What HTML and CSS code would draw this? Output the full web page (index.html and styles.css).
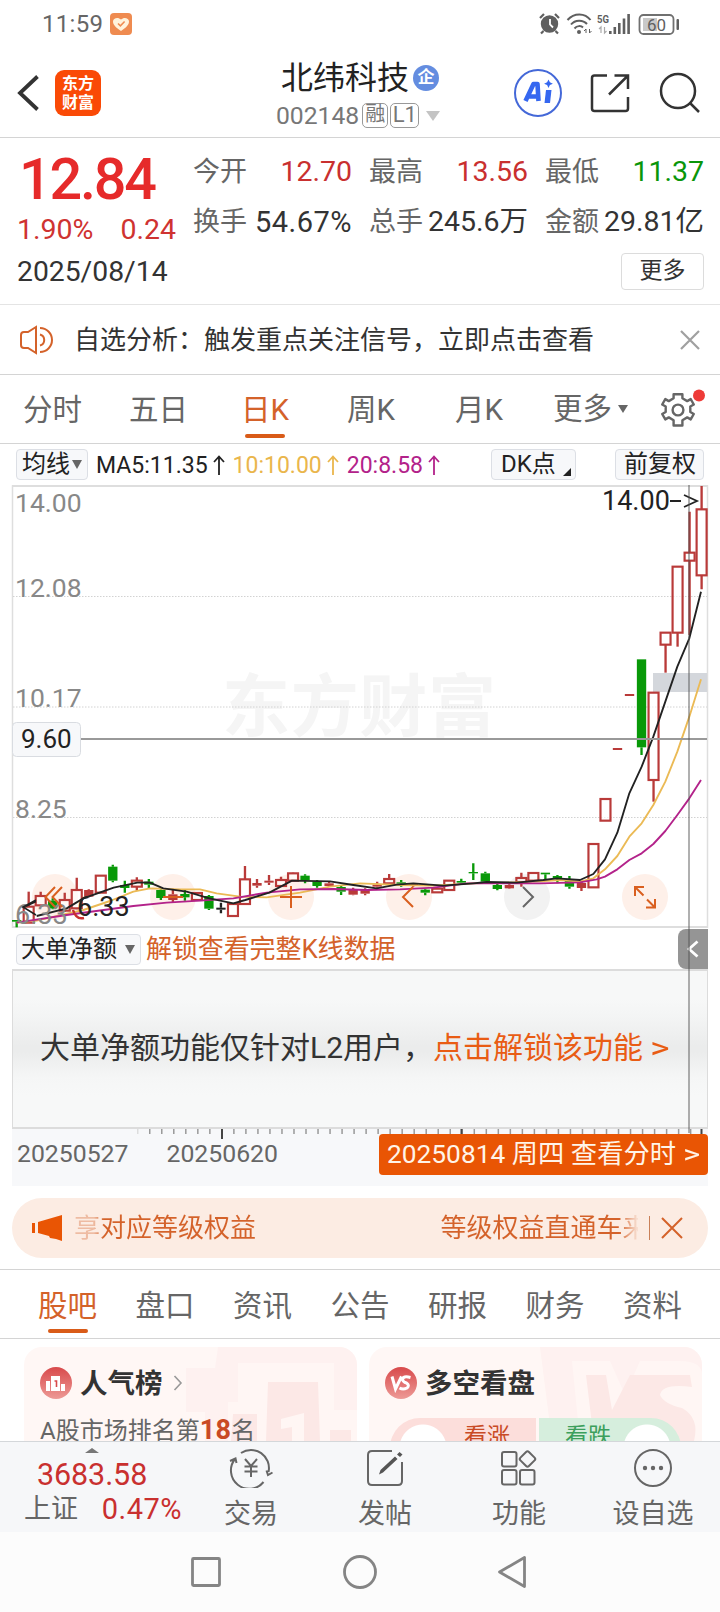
FILE: index.html
```html
<!DOCTYPE html>
<html lang="zh-CN">
<head>
<meta charset="utf-8">
<title>北纬科技 002148</title>
<link rel="stylesheet" href="styles.css">
</head>
<body>
<div class="phone">
  <div class="status">
    <span class="clock">11:59</span>
    <svg class="health" width="22" height="22" viewBox="0 0 22 22"><rect width="22" height="22" rx="4" fill="#ef8b50"/><path d="M11 18C6 14.500 3 12 3 8.500C3 5 8 3.500 11 6.500C14 3.500 19 5 19 8.500C19 12 16 14.500 11 18Z" fill="#fff3dc"/><path d="M8 10.500l2.400 2.300 4.200-4.300" fill="none" stroke="#ef8b50" stroke-width="1.600"/></svg>
    <svg class="sys" width="142" height="24" viewBox="538 12 142 24">
      <g fill="#5f5f5f">
        <circle cx="549.500" cy="24" r="8.700"/><path d="M540 18l4-4M559 18l-4-4M543.500 31l-2.500 2.500M555.500 31l2.500 2.500" stroke="#5f5f5f" stroke-width="2.200"/>
        <path d="M550 19v5.500l3 3" stroke="#fff" stroke-width="1.800" fill="none"/>
        <g fill="none" stroke="#5f5f5f" stroke-width="2"><path d="M567.500 20C574 12.500 585 12.500 590.500 20"/><path d="M571 24.500C575 19.500 583 19.500 587 24"/><path d="M574.500 28.500C577 25.500 581 25.500 583 27.500"/></g>
        <circle cx="579" cy="32" r="2"/>
        <path d="M586 33v-4l-2 2M589.500 29v4l2-2" stroke="#5f5f5f" stroke-width="1" fill="none"/>
        <text x="597" y="23" font-size="11" font-weight="700" textLength="12" lengthAdjust="spacingAndGlyphs">5G</text>
        <path d="M601 33v-6l-2 2M604.500 27v6l2-2" stroke="#aaa" stroke-width="1.200" fill="none"/>
        <rect x="609" y="31" width="2.600" height="3"/><rect x="613.500" y="27" width="2.600" height="7"/><rect x="618" y="23" width="2.600" height="11"/><rect x="622.700" y="18.500" width="2.600" height="15.500"/><rect x="627.300" y="14" width="2.600" height="20"/>
        <rect x="643" y="18" width="14" height="13" fill="#c9c9c9"/>
        <rect x="639.500" y="15" width="34" height="19" rx="4" fill="none" stroke="#707070" stroke-width="1.800"/>
        <rect x="676.500" y="19" width="2.500" height="11" rx="1"/>
        <text x="647" y="30.500" font-size="17">60</text>
      </g>
    </svg>
  </div>

  <header class="header">
    <svg class="back" width="24" height="38" viewBox="0 0 24 38"><path d="M20.500 2.500L3 19L20.500 35.500" fill="none" stroke="#333" stroke-width="3.800"/></svg>
    <div class="brand"><span>东方</span><span>财富</span></div>
    <div class="title">
      <div class="name">北纬科技<i class="corp">企</i></div>
      <div class="code">002148<i class="tag">融</i><i class="tag wide">L1</i><b class="drop"></b></div>
    </div>
    <svg class="tools" width="190" height="52" viewBox="514 67 190 52">
      <circle cx="539" cy="93" r="23" fill="none" stroke="#4468d8" stroke-width="2"/>
      <path d="M526.500 101L534.500 84H538.500L539.500 101M529.500 96.500H539" fill="none" stroke="#3567f0" stroke-width="4.600" stroke-linejoin="round"/>
      <path d="M547 90h5.500l-1.500 13h-5.500z" fill="#3567f0"/><path d="M549.500 79.500l1.400 2.800 3 1.400-3 1.400-1.400 2.800-1.400-2.800-3-1.400 3-1.400z" fill="#3567f0"/>
      <g fill="none" stroke="#333" stroke-width="2.500"><path d="M608 75.500H595.500Q593 75.500 593 78V108.500Q593 111 595.500 111H626.500Q629 111 629 108.500V97M615.500 75.500H629V89M629 75.500L610 94.500"/>
      <circle cx="679" cy="91" r="17"/><path d="M690.500 102.500L700 112"/></g>
    </svg>
  </header>

  <section class="quote">
    <div class="left">
      <div class="price">12.84</div>
      <div class="change"><span>1.90%</span><span>0.24</span></div>
      <div class="date">2025/08/14</div>
    </div>
    <div class="right">
      <dl class="stats">
        <div><dt>今开</dt><dd class="up">12.70</dd></div><div><dt>最高</dt><dd class="up">13.56</dd></div><div><dt>最低</dt><dd class="down">11.37</dd></div>
        <div><dt>换手</dt><dd class="turn">54.67%</dd></div><div><dt>总手</dt><dd>245.6万</dd></div><div><dt>金额</dt><dd>29.81亿</dd></div>
      </dl>
      <button class="more">更多</button>
    </div>
  </section>

  <section class="notice">
    <svg width="36" height="30" viewBox="0 0 36 30" fill="none" stroke="#d4622a" stroke-width="2"><path d="M17 2V28L9 23H5Q2 23 2 20V10Q2 7 5 7H9Z"/><path d="M21 9.500A5.700 5.700 0 0 1 21 20.500M21 3A12 12 0 0 1 21 27"/></svg>
    <span>自选分析：触发重点关注信号，立即点击查看</span>
    <svg class="x" width="20" height="20" viewBox="0 0 20 20"><path d="M1 1L19 19M19 1L1 19" stroke="#a0a0a0" stroke-width="2.200"/></svg>
  </section>

  <nav class="periods">
    <span>分时</span><span>五日</span><span class="on">日K</span><span>周K</span><span>月K</span><span class="pmore">更多<b></b></span>
    <svg width="48" height="42" viewBox="661 387 48 42"><path d="M674.600 393.300L674.600 397.300L669.800 400.100L666.300 398.100L663.200 403.500L666.700 405.500V411L663.200 413L666.300 418.400L669.800 416.400L674.600 419.200V424.500H683.400V419.200L688.200 416.400L691.700 418.400L694.800 413L691.300 411V405.500L694.800 403.500L691.700 398.100L688.200 400.100L683.400 397.300V393.300Z" fill="none" stroke="#666" stroke-width="2.400" stroke-linejoin="round"/><circle cx="679" cy="409" r="5.400" fill="none" stroke="#666" stroke-width="2.400"/><circle cx="700" cy="394.500" r="6" fill="#ee3b38"/></svg>
  </nav>

  <section class="board">
    <div class="mas">
      <span class="chip c1">均线<b></b></span>
      <span class="ma">MA5:11.35<svg width="12" height="20" viewBox="0 0 12 20"><path d="M6 20V2M1 7L6 1.500L11 7"/></svg></span>
      <span class="ma y">10:10.00<svg width="12" height="20" viewBox="0 0 12 20"><path d="M6 20V2M1 7L6 1.500L11 7"/></svg></span>
      <span class="ma m">20:8.58<svg width="12" height="20" viewBox="0 0 12 20"><path d="M6 20V2M1 7L6 1.500L11 7"/></svg></span>
      <span class="chip c2">DK点<b></b></span>
      <span class="chip c3">前复权</span>
    </div>
    <svg class="chart" width="720" height="443" viewBox="0 485 720 443">
      <text x="222" y="731" font-size="68" font-weight="700" fill="#f5f5f5" textLength="274">东方财富</text>
      <path d="M12.500 928V486H707.500V928" fill="none" stroke="#dedede" stroke-width="1.500"/>
      <path d="M12 486H708M12 927H708" stroke="#dedede" stroke-width="2"/>
      <path d="M13 596.500H707M13 707H707M13 817.500H707" stroke="#d2d2d2" stroke-dasharray="1.500 1.500"/>
      <rect x="653" y="673" width="54" height="19" fill="#d4d7dc"/>
      <g font-size="26.500" fill="#888"><text x="15" y="511.500">14.00</text><text x="15" y="596.500">12.08</text><text x="15" y="706.500">10.17</text><text x="15" y="817.500">8.25</text></g>
      <g fill="#fef0e9"><circle cx="55" cy="897" r="23"/><circle cx="173" cy="897" r="23"/><circle cx="291" cy="897" r="23"/><circle cx="409" cy="897" r="23"/><circle cx="527" cy="897" r="23" fill="#f2f2f2"/><circle cx="645" cy="897" r="23"/></g>
      <g id="candles" transform="translate(0 840) scale(.33333)"></g>
      <path d="M73 910Q76 920 84 918" stroke="#c9302f" stroke-width="2.500" fill="none"/>
      <text x="15" y="924" font-size="27" fill="#888">6.33</text>
      <text x="77" y="916" font-size="27" fill="#222">6.33</text>
      <path d="M36 900L23 907L36 915" stroke="#222" stroke-width="1.500" fill="none"/>
      <text x="602" y="510" font-size="27" fill="#222">14.00</text>
      <path d="M670 501H681M684 495L697 501L684 507" stroke="#222" stroke-width="1.800" fill="none"/>
      <g fill="none" stroke="#d95f1f" stroke-width="2"><path d="M55 887L45.500 897L55 907M62 887L52.500 897L62 907M280 897H302M291 886V908M163 897H183"/><path d="M413 887L403 897L413 907"/><path d="M523 887L533 897L523 907" stroke="#666"/><path d="M635 896V887H644M635 887L643.500 895.500M655 899V907.500H646M655 907.500L647 899.500"/></g>
      <path d="M12 739H707" stroke="#999" stroke-width="1.800"/>
      <rect x="12.500" y="722.500" width="68" height="34" rx="4" fill="#f7f8fa" stroke="#d9dce1"/>
      <text x="21" y="748" font-size="26" fill="#222">9.60</text>
    </svg>
    <div class="subhead">
      <span class="chip c4">大单净额<b></b></span><span class="unlock">解锁查看完整K线数据</span>
      <span class="fold"><svg width="12" height="18" viewBox="0 0 12 18"><path d="M10.500 1.500L2 9L10.500 16.500" fill="none" stroke="#fff" stroke-width="2.800"/></svg></span>
    </div>
    <div class="locked"><span>大单净额功能仅针对L2用户，</span><a>点击解锁该功能 <i>&gt;</i></a></div>
    <div class="timeline">
      <svg class="ticks" width="696" height="16" viewBox="12 1130 696 16"><path d="M137 1132H149" stroke="#ddd" stroke-width="6" stroke-dasharray="1.500 10.520"/><path d="M149 1132H700" stroke="#999" stroke-width="6" stroke-dasharray="1.500 10.520"/><path d="M222 1130V1140M461.500 1130V1135M701.500 1130V1135" stroke="#444" stroke-width="2"/></svg>
      <span class="d1">20250527</span><span class="d2">20250620</span><span class="goto">20250814 周四 查看分时 <i>&gt;</i></span>
    </div>
    <i class="cross"></i>
  </section>

  <div class="pill">
    <svg width="32" height="28" viewBox="0 0 32 28" fill="#e95504"><rect x="0" y="9" width="3" height="10"/><path d="M6 8L30 1V27L24 25L18 24L17 22L6 19Z"/></svg>
    <span class="p1">享对应等级权益</span><span class="p2">等级权益直通车来</span><i class="bar"></i>
    <svg width="22" height="22" viewBox="0 0 22 22"><path d="M1 1L21 21M21 1L1 21" stroke="#d4622a" stroke-width="2"/></svg>
  </div>

  <nav class="tabs"><span class="on">股吧</span><span>盘口</span><span>资讯</span><span>公告</span><span>研报</span><span>财务</span><span>资料</span></nav>

  <section class="cards">
    <div class="card">
      <svg class="art" width="333" height="94" viewBox="24 1347 333 94"><path d="M218 1347H357V1441H205V1412H186V1368H215Z" fill="#fef1f0"/><path d="M238 1363H334V1410H357V1441H228V1402H238Z" fill="#fff6f4"/><path d="M268 1382H318L320 1441H266ZM233 1414H257V1441H231ZM330 1430H351V1441H330Z" fill="#fce8e6"/><path d="M281 1419L304 1413V1441H292V1427L281 1429Z" fill="#fff6f4"/></svg>
      <div class="ctitle"><svg width="32" height="32" viewBox="0 0 32 32"><defs><linearGradient id="r" x2="0" y2="1"><stop stop-color="#d84a4b"/><stop offset="1" stop-color="#ed9a96"/></linearGradient></defs><circle cx="16" cy="16" r="16" fill="url(#r)"/><path d="M6 24V14H11V9H20V17H25V24H21V17H20V24H11V14H10V24Z" fill="#fff"/><path d="M14.500 14H16.500V20" fill="none" stroke="#d84a4b" stroke-width="1.600"/></svg><span>人气榜</span><svg class="chev" width="10" height="16" viewBox="0 0 10 16"><path d="M1.500 1L8 8L1.500 15" fill="none" stroke="#999" stroke-width="1.600"/></svg></div>
      <div class="rank">A股市场排名第<b>18</b>名</div>
    </div>
    <div class="card">
      <svg class="art" width="333" height="94" viewBox="369 1347 333 94"><path d="M540 1347H702V1441H552Z" fill="#fef1f0"/><path d="M572 1361H610L625 1395L640 1361H680Q702 1361 702 1375V1441H580Z" fill="#fff6f4"/><path d="M586 1375H606L612 1410L630 1375H690L692 1387Q662 1383 660 1395Q664 1404 682 1408Q700 1418 694 1441H594Z" fill="#fce8e6"/></svg>
      <div class="ctitle"><svg width="32" height="32" viewBox="0 0 32 32"><circle cx="16" cy="16" r="16" fill="url(#r)"/><path d="M7 9.500L10.500 22L16.500 9.500M25.500 10.500Q18 8.500 17.500 12.500Q18 15 21.500 16Q25 18.500 22 21Q18 23 14.500 21" fill="none" stroke="#fff" stroke-width="3"/></svg><span>多空看盘</span></div>
      <div class="vote"><span class="bull">看涨</span><span class="bear">看跌</span></div>
    </div>
  </section>

  <footer class="dock">
    <div class="index"><b class="tri"></b><div class="iv">3683.58</div><div class="il"><span>上证</span><em>0.47%</em></div></div>
    <div class="item"><svg width="44" height="40" viewBox="0 0 44 40"><path d="M12 5A18 18 0 0 1 39.500 24M34.500 34A18 18 0 0 1 6 11M1 13L6.500 10.500L7.500 15M37.500 22.500L39 27L43.500 24.500" fill="none" stroke="#666" stroke-width="2"/><path d="M16 11L22 18L28 11M15.500 18.500H28.500M15.500 23.500H28.500M22 18V29" fill="none" stroke="#666" stroke-width="2"/></svg>交易</div>
    <div class="item"><svg width="44" height="40" viewBox="0 0 44 40"><path d="M29 3H9Q5 3 5 7V33Q5 37 9 37H35Q39 37 39 33V14" fill="none" stroke="#666" stroke-width="2"/><path d="M16 26.500L17.500 22L32 8.500L34.500 11L20 24.500ZM34 6.500L36.500 4L39.500 6.500L37 9Z" fill="#555"/></svg>发帖</div>
    <div class="item"><svg width="44" height="40" viewBox="0 0 44 40"><g fill="none" stroke="#666" stroke-width="2"><rect x="5" y="4" width="14.500" height="14.500" rx="2"/><rect x="5" y="22" width="14.500" height="14.500" rx="2"/><rect x="23" y="22" width="14.500" height="14.500" rx="2"/><rect x="24.500" y="5" width="12" height="12" rx="2" transform="rotate(45 30.500 11)"/></g></svg>功能</div>
    <div class="item"><svg width="44" height="40" viewBox="0 0 44 40"><circle cx="22" cy="20" r="18" fill="none" stroke="#666" stroke-width="2"/><g fill="#666"><circle cx="14" cy="20" r="2.200"/><circle cx="22" cy="20" r="2.200"/><circle cx="30" cy="20" r="2.200"/></g></svg>设自选</div>
  </footer>
  <div class="keys">
    <svg width="720" height="80" viewBox="0 1532 720 80" fill="none" stroke="#858585" stroke-width="2.800" stroke-linejoin="round"><rect x="192.500" y="1558.500" width="27" height="27" rx="1"/><circle cx="360" cy="1572" r="15.500"/><path d="M524.500 1557.500V1586.500L499.500 1572Z"/></svg>
  </div>
</div>
<script src="chart.js"></script>
</body>
</html>
```
FILE: styles.css
```css
* { box-sizing: border-box; }
body { margin: 0; background: #fff; color: #333; font-family: Roboto, "Noto Sans CJK SC", sans-serif; }
i, em { font-style: normal; }
svg { display: block; flex: none; }
dl, dd { margin: 0; }
.phone { width: 720px; height: 1612px; overflow: hidden; }
.up { color: #c9302f; }
.down { color: #0a960a; }

.status { height: 48px; padding: 0 40px 0 42px; display: flex; align-items: center; color: #666; }
.clock { font-size: 24px; letter-spacing: .3px; }
.health { margin-left: 7px; }
.sys { margin-left: auto; }

.header { height: 90px; border-bottom: 1px solid #d4d4d4; padding: 0 17px 0 17px; display: flex; align-items: center; }
.brand { margin-left: 14px; width: 46px; height: 46px; border-radius: 9px; background: #fa4a06; color: #fff; font-size: 16px; line-height: 19px; font-weight: 700; padding-top: 4px; display: flex; flex-direction: column; align-items: center; }
.title { width: 224px; margin-left: 149px; text-align: center; margin-right: auto; }
.name { height: 42px; margin-top: 4px; font-size: 32px; line-height: 42px; color: #222; display: flex; align-items: center; padding-left: 31px; }
.corp { width: 26px; height: 26px; margin-left: 4px; border-radius: 50%; background: #648de0; color: #fff; font-size: 17px; line-height: 25px; font-weight: 700; }
.code { height: 34px; font-size: 24.700px; line-height: 34px; color: #777; display: flex; align-items: center; padding-left: 26px; }
.tag { width: 26px; height: 25px; margin-left: 3px; border: 1.500px solid #999; border-radius: 5px; font-size: 20px; line-height: 21px; }
.wide { width: 29px; margin-left: 2px; font-size: 22px; }
.drop { margin-left: 7px; border: 7px solid transparent; border-top: 10px solid #c4c4c4; border-bottom: 0; }

.quote { height: 167px; border-bottom: 1px solid #e4e4e4; display: grid; grid-template-columns: 193px 1fr; }
.left { padding: 6px 0 0 17px; }
.price { height: 68px; line-height: 71px; font-size: 57.500px; font-weight: 500; color: #e62a2a; letter-spacing: -2.200px; padding-left: 2px; }
.change { height: 36px; line-height: 36px; width: 159px; font-size: 28.500px; color: #cf3331; display: flex; justify-content: space-between; }
.date { height: 48px; line-height: 48px; font-size: 28.300px; }
.right { padding: 9px 17px 0 0; display: flex; flex-direction: column; }
.stats { display: grid; grid-template-columns: repeat(3, 159px); column-gap: 17px; }
.stats div { height: 50px; display: flex; align-items: center; justify-content: space-between; white-space: nowrap; }
.stats dt { font-size: 27px; color: #666; line-height: 50px; height: 50px; }
.stats dd { font-size: 28.500px; line-height: 50px; }
.stats .turn { font-size: 29px; letter-spacing: .5px; }
.more { align-self: flex-end; margin-top: 6px; width: 83px; height: 37px; border: 1px solid #dcdcdc; border-radius: 4px; background: #fff; color: #333; padding: 0 0 6px; font: 23px/29px "Noto Sans CJK SC", sans-serif; }

.notice { height: 70px; border-bottom: 1px solid #d4d4d4; padding: 0 20px 0 19px; display: flex; align-items: center; font-size: 26px; }
.notice span { margin: 0 0 5px 19px; }
.x { margin-left: auto; }

.periods { height: 69px; border-bottom: 1px solid #d4d4d4; padding: 0 12px 0 23px; display: flex; align-items: center; font-size: 29.500px; color: #666; }
.periods span { height: 68px; line-height: 70px; width: 106px; }
.periods span:nth-child(2) { width: 112px; }
.periods span:nth-child(4) { width: 108px; }
.on { color: #d4622a; position: relative; }
.on::after { content: ""; position: absolute; width: 40px; height: 4px; border-radius: 2px; background: #d95b18; left: 4px; bottom: 5px; }
.periods .pmore { margin-right: auto; margin-left: -8px; display: flex; align-items: center; }
.pmore b { margin-left: 6px; border: 5px solid transparent; border-top: 8px solid #666; border-bottom: 0; }

.board { position: relative; }
.mas { height: 41px; padding: 5px 16px 0; display: flex; align-items: flex-start; color: #222; }
.chip { height: 31px; border: 1px solid #dcdfe5; border-radius: 4px; background: #f7f8fa; font-size: 24px; line-height: 27px; color: #222; display: flex; align-items: center; white-space: nowrap; }
.c1 { width: 72px; padding-left: 5px; }
.c1 b, .c4 b { margin-left: 2px; border: 5px solid transparent; border-top: 9px solid #666; border-bottom: 0; }
.ma { height: 32px; display: flex; align-items: center; font-size: 23px; margin-left: 8px; }
.ma svg { margin-left: 5px; fill: none; stroke: #222; stroke-width: 1.800; }
.ma + .ma { margin-left: 8px; }
.y { color: #eab64c; } .y svg { stroke: #eab64c; }
.m { color: #b3228a; } .m svg { stroke: #b3228a; }
.c2 { width: 85px; margin-left: auto; padding-left: 9px; position: relative; }
.c2 b { position: absolute; right: 4px; bottom: 3px; border-left: 8px solid transparent; border-bottom: 8px solid #222; }
.c3 { width: 89px; margin-left: 39px; padding-left: 8px; }
.subhead { height: 41px; padding: 0 12px 0 16px; display: flex; align-items: center; }
.c4 { width: 125px; padding-left: 4px; margin-top: 1px; }
.c4 b { margin-left: 8px; }
.unlock { margin-left: 5px; font-size: 26px; line-height: 36px; color: #d4622a; letter-spacing: -.1px; }
.fold { margin-left: auto; width: 30px; height: 40px; border-radius: 8px 0 0 8px; background: #959595; display: flex; align-items: center; justify-content: center; }
.locked { height: 160px; margin: 0 12px; padding: 0 0 8px 27px; border: 1px solid #dcdcdc; border-top-width: 2px; border-bottom-width: 2px; background: linear-gradient(#f7f8f8 0 18%, #f3f4f4 30%, #ebecec 48%, #ebecec 52%, #f5f6f6 68%, #f7f8f8 80%); display: flex; align-items: center; font-size: 30px; white-space: nowrap; }
.locked a { color: #e95c14; }
.locked i, .goto i { display: inline-block; transform: scaleX(1.25); transform-origin: 0 50%; }
.timeline { height: 57px; margin: 0 12px; background: #f7f8fa; position: relative; display: flex; align-items: flex-start; font-size: 24.800px; line-height: 40px; color: #666; padding-top: 5px; }
.ticks { position: absolute; left: 0; top: 0; }
.d1 { margin-left: 5px; }
.d2 { margin-left: 38px; }
.goto { margin-left: auto; width: 329px; height: 41px; border-radius: 4px; background: #e95504; color: #fff4e8; padding-left: 8px; font-size: 26.300px; line-height: 40px; white-space: nowrap; position: relative; }
.cross { position: absolute; left: 688px; top: 41px; width: 2px; height: 648px; background: rgba(80, 80, 80, .45); }

.pill { height: 60px; margin: 12px 12px 0; padding: 0 25px 0 20px; border-radius: 30px; background: #fcece3; display: flex; align-items: center; font-size: 26px; color: #d4622a; white-space: nowrap; overflow: hidden; }
.p1, .p2 { margin-bottom: 5px; }
.p1 { margin-left: 10px; background: linear-gradient(90deg, rgba(212,98,42,.35) 20px, #d4622a 30px); -webkit-background-clip: text; color: transparent; }
.p2 { margin-left: auto; width: 197px; overflow: hidden; background: linear-gradient(90deg, #d4622a 178px, rgba(212,98,42,.1) 196px); -webkit-background-clip: text; color: transparent; }
.bar { width: 1.500px; height: 24px; margin: 0 11px; background: #c98058; }

.tabs { height: 70px; margin-top: 11px; border: solid #d4d4d4; border-width: 1px 0; padding: 0 38px 0 38px; display: flex; justify-content: space-between; font-size: 29.500px; line-height: 72px; color: #666; }
.tabs .on::after { left: 10px; bottom: 5px; }

.cards { height: 102px; padding: 8px 18px 0 24px; display: flex; gap: 12px; overflow: hidden; }
.card { width: 333px; height: 120px; border-radius: 18px 18px 0 0; background: #fff7f5; overflow: hidden; position: relative; padding: 16px 16px 0; }
.art { position: absolute; left: 0; top: 0; }
.ctitle { position: relative; height: 40px; display: flex; align-items: center; gap: 8px; font-size: 27.500px; font-weight: 700; }
.ctitle span { margin-bottom: 4px; }
.chev { margin-left: 2px; }
.rank { position: relative; font-size: 24px; line-height: 34px; margin-top: 10px; color: #666; }
.rank b { color: #c94a25; font-size: 27px; letter-spacing: .3px; }
.vote { position: relative; margin: 15px 5px 0; height: 60px; border-radius: 30px; overflow: hidden; display: flex; gap: 3px; font-size: 23px; line-height: 37px; }
.bull { width: 146px; background: radial-gradient(circle at 33px 30px, #fff 23px, transparent 24px) #fcdedb; color: #c94a25; padding-left: 74px; }
.bear { width: 142px; background: radial-gradient(circle at 108px 30px, #fff 23px, transparent 24px) #d6eedd; color: #3c9f5c; padding-left: 26px; }

.dock { height: 91px; border-top: 1px solid #d4d7da; background: #f6f7f9; display: flex; padding-left: 17px; }
.index { width: 167px; padding: 15px 0 0 7px; position: relative; color: #c9302f; }
.tri { position: absolute; left: 68px; top: 6px; border: 7px solid transparent; border-bottom: 5px solid #777; border-top: 0; }
.iv { font-size: 30.500px; line-height: 36px; padding-left: 13px; letter-spacing: -.1px; }
.il { font-size: 29px; line-height: 32px; display: flex; justify-content: space-between; width: 158px; }
.il span { color: #666; font-size: 27px; } .il em { letter-spacing: .5px; }
.item { width: 134px; display: flex; flex-direction: column; align-items: center; font-size: 27px; line-height: 40px; color: #666; padding-top: 6px; gap: 6px; }
.item svg { margin-left: -1px; }
.keys { height: 80px; background: #fcfcfc; }
```
FILE: chart.js
```js
// One row per trading day: [colour, high, body top, body bottom, low, hollow]
var days = [
  ['g',240,240,245,262],['r',155,200,248,248,1],['r',155,168,196,198,1],['g',175,182,205,208],['r',158,180,212,215,1],['r',113,150,205,208,1],['r',148,150,170,172],['r',105,107,158,158,1],['g',74,80,122,127],
  ['g',122,135,144,158],['r',112,122,140,152,1],['g',117,125,134,146],['g',148,150,174,180],['r',146,163,180,186],['g',150,162,172,182],['r',157,159,180,180,1],['g',165,168,206,210],['k',188,203,209,220],['r',190,192,228,228,1],
  ['r',78,118,192,194,1],['r',117,129,137,143],['r',105,122,128,135],['r',110,120,138,140,1],['r',98,100,122,122,1],['g',103,107,121,130],['g',120,124,138,143],['r',125,130,138,140],['g',138,141,155,165],['r',143,150,164,166],
  ['r',145,150,161,166],['r',125,134,140,143],['r',102,117,130,132,1],['g',120,127,131,140],['r',130,132,138,140],['g',146,149,158,166],['r',143,146,157,157,1],['r',122,122,150,150,1],['g',116,123,128,134],['g',70,96,100,120],['g',95,100,125,130],
  ['g',132,135,147,151],['r',133,135,145,146],['r',98,114,126,140,1],['r',96,99,122,122,1],['g',98,98,103,120],['g',105,108,117,130],['g',108,122,140,146],['r',125,129,144,153],['r',10,12,142,142,1],
  ['r',-123,-123,-58,-58,1],['r',-276,-276,-270,-270],['r',-438,-438,-432,-432],['g',-542,-542,-278,-255],['r',-442,-442,-180,-115,1],['r',-622,-622,-586,-502,1],['r',-820,-820,-622,-580,1],['r',-985,-862,-838,-615,1],['r',-1062,-992,-794,-752,1]
];
var colours = { g: '#089908', r: '#b93a39', k: '#222' };
var out = '';
days.forEach(function (d, i) {
  var x = 50 + 36.05 * i, c = colours[d[0]];
  out += '<path d="M' + x + ' ' + d[1] + 'V' + d[2] + 'M' + x + ' ' + d[3] + 'V' + d[4] + '" stroke="' + c + '" stroke-width="7"/>';
  out += d[5]
    ? '<rect x="' + (x - 15) + '" y="' + d[2] + '" width="30" height="' + (d[3] - d[2]) + '" fill="#fff" fill-opacity=".6" stroke="' + c + '" stroke-width="6.500"/>'
    : '<rect x="' + (x - 14) + '" y="' + d[2] + '" width="28" height="' + (d[3] - d[2]) + '" fill="' + c + '"/>';
});
function line(points, colour) {
  out += '<polyline points="' + points + '" fill="none" stroke="' + colour + '" stroke-width="5.600" stroke-linejoin="round"/>';
}
line('50,248 110,242 250,210 330,183 400,155 450,145 540,148 600,148 650,160 720,170 800,172 900,158 990,140 1080,130 1200,135 1300,137 1420,130 1520,128 1620,124 1680,120 1740,125 1780,115 1815,88 1852,48 1888,-10 1925,-50 1960,-105 1996,-175 2032,-265 2068,-370 2103,-482', '#ebba55');
line('50,248 200,225 400,198 500,188 600,182 700,175 800,158 900,148 1000,147 1100,150 1200,148 1300,143 1400,130 1500,130 1620,130 1740,127 1790,118 1815,110 1852,88 1888,60 1925,40 1960,12 1996,-27 2032,-75 2068,-125 2103,-180', '#b3228a');
line('68,203 108,184', '#222');
line('110,228 200,205 250,175 341,143 412,128 448,127 490,145 560,155 628,175 700,190 736,180 808,158 876,122 990,124 1060,135 1130,145 1190,134 1240,130 1330,137 1420,130 1460,126 1550,128 1630,120 1670,115 1740,120 1780,102 1815,58 1852,-22 1888,-140 1925,-220 1960,-310 1996,-415 2032,-520 2068,-605 2103,-745', '#222');
document.getElementById('candles').innerHTML = out;
```
